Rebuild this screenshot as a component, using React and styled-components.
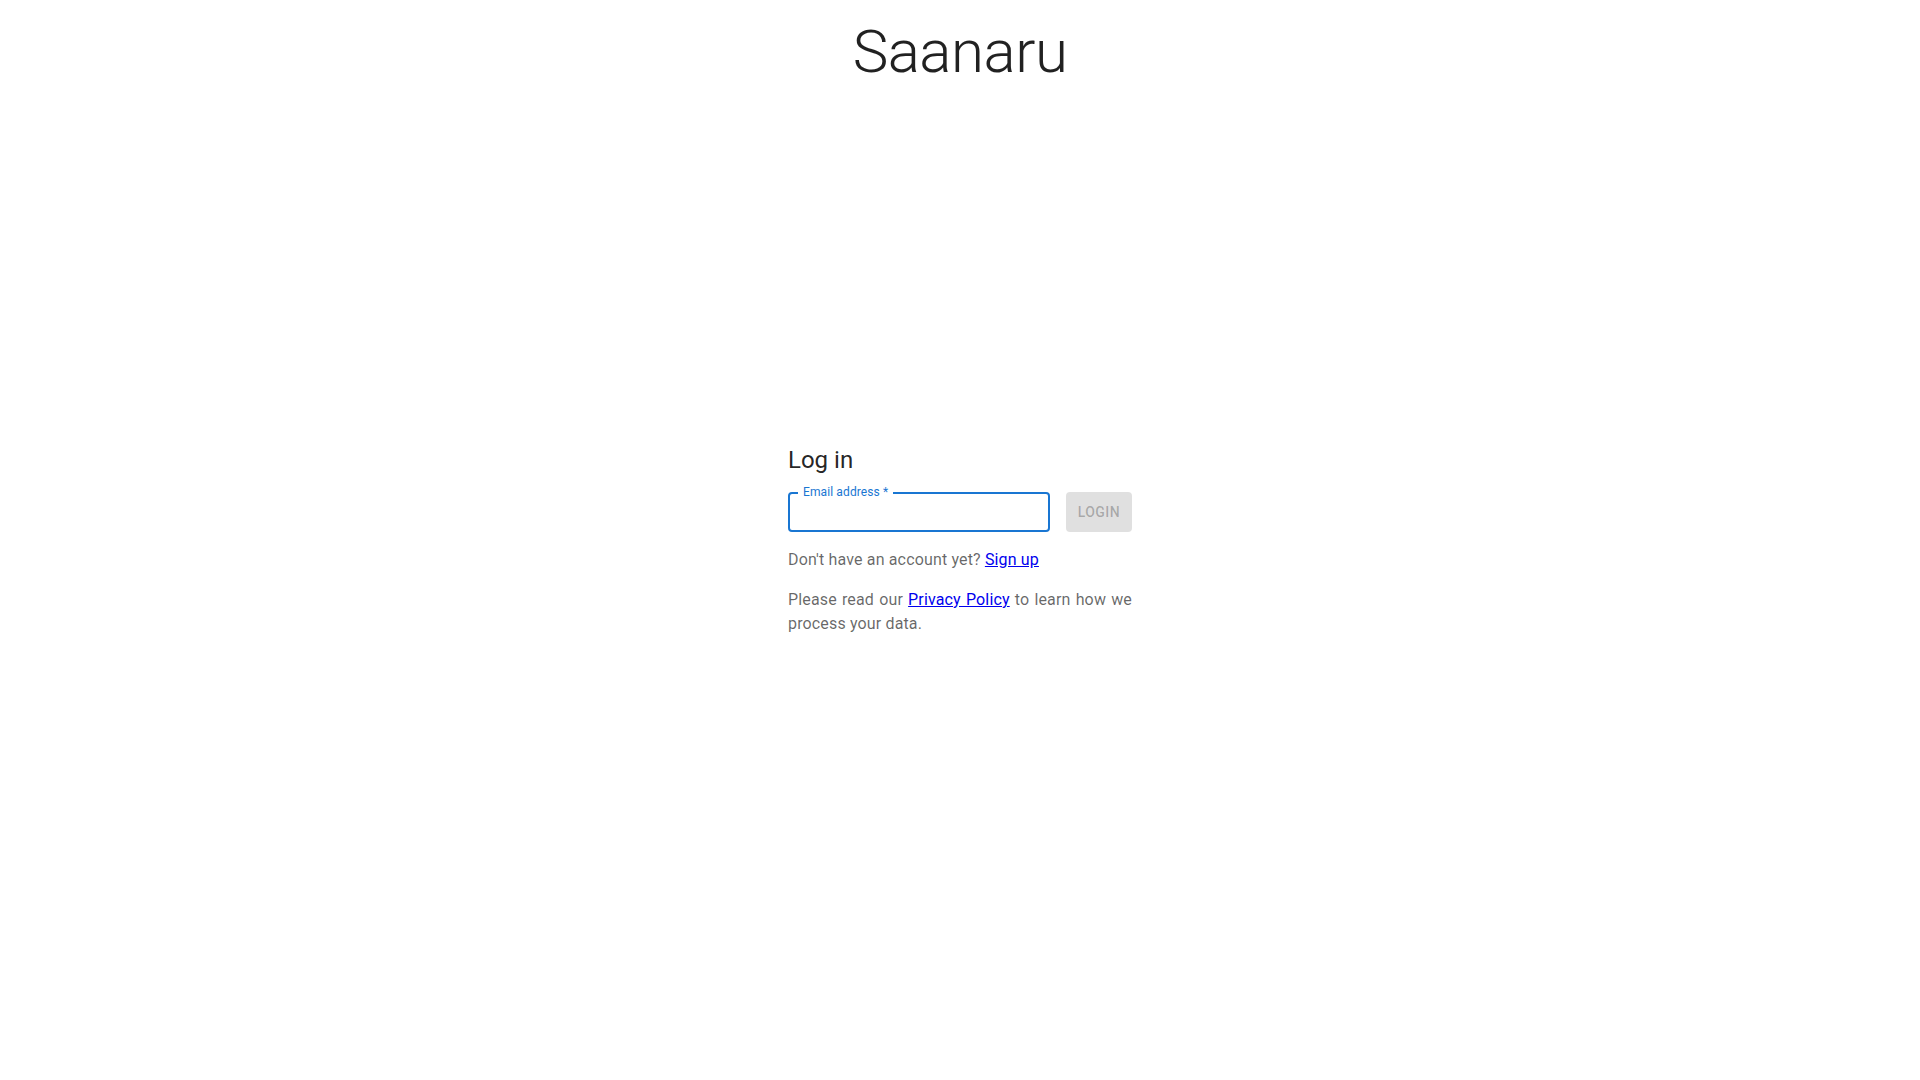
import React from "react";
import styled, { createGlobalStyle } from "styled-components";

const Global = createGlobalStyle`
  html, body { margin: 0; padding: 0; background: #fff; }
  body { font-family: Roboto, "Helvetica Neue", Arial, sans-serif; -webkit-font-smoothing: antialiased; }
  * { box-sizing: border-box; }
`;

const Page = styled.div`
  min-height: 100vh;
  display: grid;
  grid-template-rows: 1fr auto 1fr;
  justify-items: center;
`;

const Title = styled.h1`
  margin: 0;
  padding-top: 16px;
  align-self: start;
  font-size: 60px;
  font-weight: 300;
  line-height: 1.2;
  letter-spacing: -0.00833em;
  color: rgba(0, 0, 0, 0.87);
`;

const Panel = styled.main`
  width: 344px;
  display: flex;
  flex-direction: column;
  gap: 16px;
`;

const Heading = styled.h2`
  margin: 0;
  font-size: 24px;
  font-weight: 400;
  line-height: 1.334;
  color: rgba(0, 0, 0, 0.87);
`;

const FormRow = styled.form`
  display: flex;
  align-items: center;
  gap: 16px;
  margin: 0;
`;

const Field = styled.div`
  position: relative;
  flex: 1;
  height: 40px;
  border: 2px solid #1976d2;
  border-radius: 4px;
`;

const FloatLabel = styled.label`
  position: absolute;
  top: -9px;
  left: 8px;
  padding: 0 5px;
  background: #fff;
  font-size: 12px;
  line-height: 14px;
  letter-spacing: 0.00938em;
  color: #1976d2;
`;

const Input = styled.input`
  display: block;
  width: 100%;
  height: 100%;
  border: 0;
  outline: none;
  background: transparent;
  padding: 0 12px;
  font: inherit;
  font-size: 16px;
  color: rgba(0, 0, 0, 0.87);
`;

const Button = styled.button`
  height: 40px;
  padding: 0 12px;
  border: 0;
  border-radius: 4px;
  background: rgba(0, 0, 0, 0.12);
  color: rgba(0, 0, 0, 0.26);
  font-family: inherit;
  font-size: 14px;
  font-weight: 500;
  letter-spacing: 0.02857em;
  text-transform: uppercase;
  cursor: default;
`;

const Text = styled.p`
  margin: 0;
  font-size: 16px;
  line-height: 1.5;
  letter-spacing: 0.00938em;
  color: rgba(0, 0, 0, 0.6);
  text-align: ${(p) => (p.$justify ? "justify" : "left")};
`;

const Link = styled.a`
  color: #0000ee;
  text-decoration: underline;
`;

export default function App() {
  return (
    <>
      <Global />
      <Page>
        <Title>Saanaru</Title>
        <Panel>
          <Heading>Log in</Heading>
          <FormRow onSubmit={(e) => e.preventDefault()}>
            <Field>
              <FloatLabel htmlFor="email">Email address *</FloatLabel>
              <Input id="email" type="email" />
            </Field>
            <Button type="submit" disabled>Login</Button>
          </FormRow>
          <Text>
            Don't have an account yet? <Link href="#">Sign up</Link>
          </Text>
          <Text $justify>
            Please read our <Link href="#">Privacy Policy</Link> to learn how we process your data.
          </Text>
        </Panel>
        <div />
      </Page>
    </>
  );
}
